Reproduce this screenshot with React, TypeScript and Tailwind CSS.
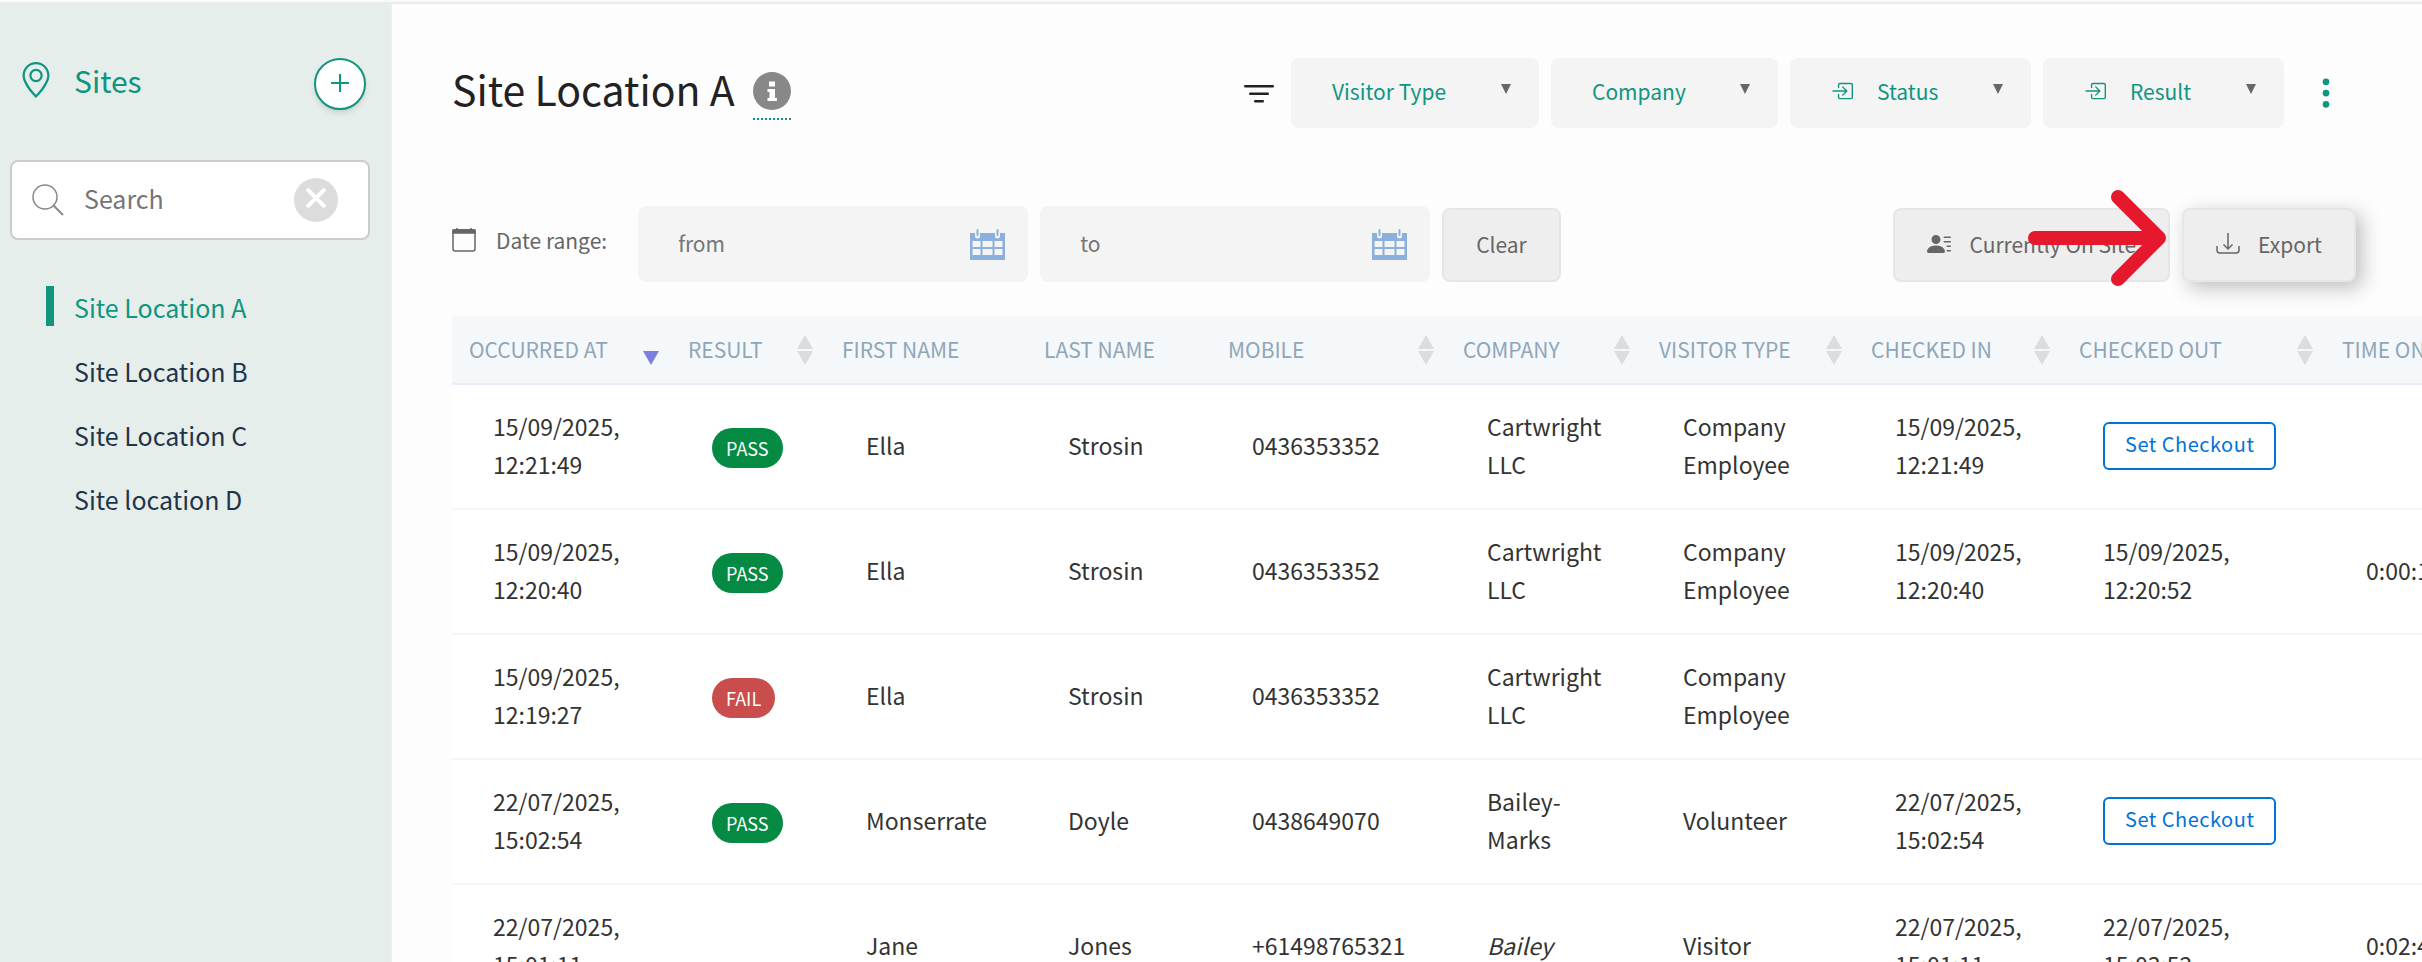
import { useState } from "react";
import type { ReactNode } from "react";
import {
  BsBoxArrowInRight,
  BsFilter,
  BsGeoAlt,
  BsPersonLinesFill,
  BsThreeDotsVertical,
} from "react-icons/bs";

const sites = ["Site Location A", "Site Location B", "Site Location C", "Site location D"];

type Column = { label: string; width: string; sort?: "none" | "desc" };

const columns: Column[] = [
  { label: "Occurred at", width: "w-[219px]", sort: "desc" },
  { label: "Result", width: "w-[154px]", sort: "none" },
  { label: "First name", width: "w-[202px]" },
  { label: "Last name", width: "w-[184px]" },
  { label: "Mobile", width: "w-[235px]", sort: "none" },
  { label: "Company", width: "w-[196px]", sort: "none" },
  { label: "Visitor type", width: "w-[212px]", sort: "none" },
  { label: "Checked in", width: "w-[208px]", sort: "none" },
  { label: "Checked out", width: "w-[263px]", sort: "none" },
  { label: "Time on site", width: "w-[220px]", sort: "none" },
];

type Visit = {
  occurredAt: string;
  result?: "PASS" | "FAIL";
  first: string;
  last: string;
  mobile: string;
  company: string;
  companyItalic?: boolean;
  type: string;
  checkedIn?: string;
  checkedOut?: string;
  time?: string;
};

const visits: Visit[] = [
  { occurredAt: "15/09/2025, 12:21:49", result: "PASS", first: "Ella", last: "Strosin", mobile: "0436353352", company: "Cartwright LLC", type: "Company Employee", checkedIn: "15/09/2025, 12:21:49" },
  { occurredAt: "15/09/2025, 12:20:40", result: "PASS", first: "Ella", last: "Strosin", mobile: "0436353352", company: "Cartwright LLC", type: "Company Employee", checkedIn: "15/09/2025, 12:20:40", checkedOut: "15/09/2025, 12:20:52", time: "0:00:12" },
  { occurredAt: "15/09/2025, 12:19:27", result: "FAIL", first: "Ella", last: "Strosin", mobile: "0436353352", company: "Cartwright LLC", type: "Company Employee" },
  { occurredAt: "22/07/2025, 15:02:54", result: "PASS", first: "Monserrate", last: "Doyle", mobile: "0438649070", company: "Bailey-Marks", type: "Volunteer", checkedIn: "22/07/2025, 15:02:54" },
  { occurredAt: "22/07/2025, 15:01:11", first: "Jane", last: "Jones", mobile: "+61498765321", company: "Bailey", companyItalic: true, type: "Visitor", checkedIn: "22/07/2025, 15:01:11", checkedOut: "22/07/2025, 15:03:52", time: "0:02:41" },
];

function FilterSelect({ label, icon }: { label: string; icon?: ReactNode }) {
  return (
    <label className="flex h-[70px] items-center rounded-lg bg-[#f4f4f4] pr-7 pl-[41px] text-[#0f9580]">
      {icon}
      <select aria-label={label} className="appearance-none bg-transparent pb-1 text-[21px] leading-8">
        <option>{label}</option>
      </select>
      <svg viewBox="0 0 10 10" className="mb-2 ml-[54px] size-[10px] fill-[#666]">
        <path d="M0 0h10L5 10z" />
      </svg>
    </label>
  );
}

function DateInput({ name }: { name: string }) {
  return (
    <label className="flex h-[76px] w-[390px] items-center rounded-lg bg-[#f4f4f4] pr-[23px] pl-10">
      <input
        type="text"
        aria-label={`Date ${name}`}
        placeholder={name}
        className="min-w-0 flex-1 bg-transparent pb-0.5 text-[21px] leading-8 outline-none placeholder:text-[#757575]"
      />
      <svg viewBox="0 0 35 31" className="h-[31px] w-[35px] fill-[#8cb0dd]">
        <path
          fillRule="evenodd"
          d="M0 4h5v3a2.500 2.500 0 0 0 5 0V4h15v3a2.500 2.500 0 0 0 5 0V4h5v27H0zM2.500 12v6h8v-6zm10 0v6h10v-6zm12 0v6h8v-6zM2.500 20v6h8v-6zm10 0v6h10v-6zm12 0v6h8v-6z"
        />
        <rect x="6.500" y="0" width="2" height="7" rx="1" />
        <rect x="26.500" y="0" width="2" height="7" rx="1" />
      </svg>
    </label>
  );
}

function SortArrows({ sort }: { sort: "none" | "desc" }) {
  return (
    <svg viewBox="0 0 16 30" className="h-[30px] w-4 shrink-0">
      {sort === "none" && <path d="M8 0l8 14H0z" fill="#dcdcdc" />}
      <path d="M0 16h16L8 30z" fill={sort === "desc" ? "#7b7fe0" : "#dcdcdc"} />
    </svg>
  );
}

function Sidebar({ active, onSelect }: { active: string; onSelect: (site: string) => void }) {
  return (
    <aside className="w-[392px] shrink-0 border-r-2 border-[#eee] bg-[#e6eeec]">
      <div className="flex items-start pt-[54px] pr-6 pl-[18px] text-[#0f9580]">
        <BsGeoAlt className="mt-1 size-9" />
        <h2 className="ml-5 flex-1 text-[30px] leading-[44px]">Sites</h2>
        <button
          aria-label="Add site"
          className="flex size-[52px] items-center justify-center rounded-full border-2 border-[#0f9580] bg-white pb-0.5 shadow-md"
        >
          <svg viewBox="0 0 18 18" className="size-[18px] stroke-current stroke-2">
            <path d="M9 0v18M0 9h18" />
          </svg>
        </button>
      </div>

      <label className="mt-[50px] mr-5 ml-[10px] flex h-20 items-center rounded-lg border-2 border-[#ccc] bg-white pr-[30px] pl-5">
        <svg viewBox="0 0 32 32" className="size-8 shrink-0 fill-none stroke-[#888] stroke-[1.5]">
          <circle cx="13" cy="13" r="12" />
          <path d="M21.500 21.500L31 31" strokeWidth="2" />
        </svg>
        <input
          type="text"
          aria-label="Search sites"
          placeholder="Search"
          className="ml-5 min-w-0 flex-1 pb-1 text-[25px] leading-9 outline-none placeholder:text-[#757575]"
        />
        <button aria-label="Clear search" className="flex size-11 items-center justify-center rounded-full bg-[#dcdcdc] pb-1">
          <svg viewBox="0 0 20 20" className="size-5 stroke-white stroke-4">
            <path d="M1 1l18 18M19 1L1 19" />
          </svg>
        </button>
      </label>

      <nav className="mt-[46px] ml-[46px] flex flex-col gap-6">
        {sites.map((site) => (
          <a
            key={site}
            href="#"
            onClick={() => onSelect(site)}
            className={
              site === active
                ? "border-l-8 border-[#0f9580] pt-[3px] pb-px pl-5 text-[25px] leading-9 text-[#0f9580]"
                : "border-l-8 border-transparent pt-[3px] pb-px pl-5 text-[25px] leading-9 text-[#1f3548]"
            }
          >
            {site}
          </a>
        ))}
      </nav>
    </aside>
  );
}

function VisitRow({ visit }: { visit: Visit }) {
  const cell = "pr-6 pb-1 pl-[41px]";

  return (
    <tr className="h-[125px] border-b-2 border-[#f5f5f5]">
      <td className={cell}>{visit.occurredAt}</td>
      <td className={cell}>
        {visit.result && (
          <span
            className={
              visit.result === "PASS"
                ? "mt-1.5 inline-block rounded-full bg-[#048a42] px-[14px] align-middle text-[18px] leading-10 text-white"
                : "mt-1.5 inline-block rounded-full bg-[#c94d4d] px-[14px] align-middle text-[18px] leading-10 text-white"
            }
          >
            {visit.result}
          </span>
        )}
      </td>
      <td className={cell}>{visit.first}</td>
      <td className={cell}>{visit.last}</td>
      <td className={cell}>{visit.mobile}</td>
      <td className={visit.companyItalic ? `${cell} italic` : cell}>{visit.company}</td>
      <td className={cell}>{visit.type}</td>
      <td className={cell}>{visit.checkedIn}</td>
      <td className={cell}>
        {visit.checkedIn && !visit.checkedOut ? (
          <button className="mt-0.5 block h-12 rounded-md border-2 border-[#0073d9] bg-white px-5 pb-1 text-[20px] leading-8 tracking-wide whitespace-nowrap text-[#0073d9]">
            Set Checkout
          </button>
        ) : (
          visit.checkedOut
        )}
      </td>
      <td className={cell}>{visit.time}</td>
    </tr>
  );
}

export default function App() {
  const [site, setSite] = useState(sites[0]);
  const button =
    "flex h-[74px] items-center rounded-lg border-2 border-[#e6e6e6] bg-[#eee] px-8 pb-0.5 text-[21px] leading-8 text-[#666]";

  return (
    <div className="flex h-screen flex-col overflow-hidden bg-[#fdfdfd] font-['Noto_Sans_CJK_SC',sans-serif] text-[#333]">
      <div className="h-1 shrink-0 border-b-2 border-[#ececec] bg-[#f9f9f9]" />
      <div className="flex min-h-0 flex-1">
        <Sidebar active={site} onSelect={setSite} />

        <main className="min-w-0 flex-1 overflow-hidden pl-[60px]">
          <header className="flex items-center pt-[54px] pr-[74px]">
            <h1 className="pb-[10px] text-[41px] leading-[60px] text-[#222]">{site}</h1>
            <button aria-label="Site details" className="mt-1.5 ml-[18px] border-b-2 border-dotted border-[#0f9580] pb-2">
              <svg viewBox="0 0 38 38" className="size-[38px]">
                <circle cx="19" cy="19" r="19" fill="#888" />
                <path
                  fill="#fff"
                  d="M16 9.500h6v5h-6zM14.500 17h7.500v9h2v3H14.500v-3h2v-6h-2z"
                />
              </svg>
            </button>

            <div className="ml-auto flex items-center gap-3">
              <BsFilter className="mt-1 size-10 text-[#222]" />
              <FilterSelect label="Visitor Type" />
              <FilterSelect label="Company" />
              <FilterSelect label="Status" icon={<BsBoxArrowInRight className="mr-6 mb-1 size-[22px]" />} />
              <FilterSelect label="Result" icon={<BsBoxArrowInRight className="mr-6 mb-1 size-[22px]" />} />
              <button aria-label="More options" className="ml-2 px-1 text-[#0f9580]">
                <BsThreeDotsVertical className="size-9" />
              </button>
            </div>
          </header>

          <section className="mt-[78px] flex items-end gap-3 pr-[66px]">
            <div className="flex items-center self-center pb-2 text-[21px] leading-8 text-[#666]">
              <svg viewBox="0 0 24 24" className="mr-5 size-6 fill-none stroke-[#666] stroke-[1.5]">
                <rect x="1" y="2" width="22" height="21" rx="2" />
                <path d="M1 2h22v3H1z" fill="#666" />
                <path d="M5 0v2M19 0v2" />
              </svg>
              <span className="mr-[19px]">Date range:</span>
            </div>
            <DateInput name="from" />
            <DateInput name="to" />
            <button className={button}>Clear</button>
            <button className={`${button} ml-auto`}>
              <BsPersonLinesFill className="mr-[18px] size-6" />
              Currently On Site
            </button>
            <div className="relative">
              <button className={`${button} shadow-[6px_6px_20px_rgba(0,0,0,0.25)]`}>
                <svg viewBox="0 0 24 24" className="mr-[18px] size-6 fill-none stroke-current stroke-[1.5]">
                  <path d="M12 1v16M7.500 12.500L12 17l4.500-4.500M1 14v4a3 3 0 0 0 3 3h16a3 3 0 0 0 3-3v-4" />
                </svg>
                Export
              </button>
              <svg
                viewBox="0 0 138 96"
                className="pointer-events-none absolute right-full bottom-0 mr-4 -mb-1 h-24 w-[138px] fill-none stroke-[#e5182d] stroke-[14]"
                strokeLinecap="round"
                strokeLinejoin="round"
              >
                <path d="M7 48h122M90 7l41 41-41 41" />
              </svg>
            </div>
          </section>

          <div className="mt-[34px] overflow-hidden">
            <table className="w-[2093px] table-fixed border-collapse bg-white text-left text-[23px] leading-[38px]">
              <thead>
                <tr className="h-[68px] border-b-2 border-[#e8eef7] bg-[#f4f8fb] text-[21px] text-[#8fa6b8]">
                  {columns.map((col) => (
                    <th key={col.label} className={`${col.width} pr-3 pl-[17px] font-normal uppercase`}>
                      <div className="flex items-center justify-between whitespace-nowrap">
                        <span className="pb-0.5">{col.label}</span>
                        {col.sort && <SortArrows sort={col.sort} />}
                      </div>
                    </th>
                  ))}
                </tr>
              </thead>
              <tbody>
                {visits.map((visit) => (
                  <VisitRow key={visit.occurredAt} visit={visit} />
                ))}
              </tbody>
            </table>
          </div>
        </main>
      </div>
    </div>
  );
}
